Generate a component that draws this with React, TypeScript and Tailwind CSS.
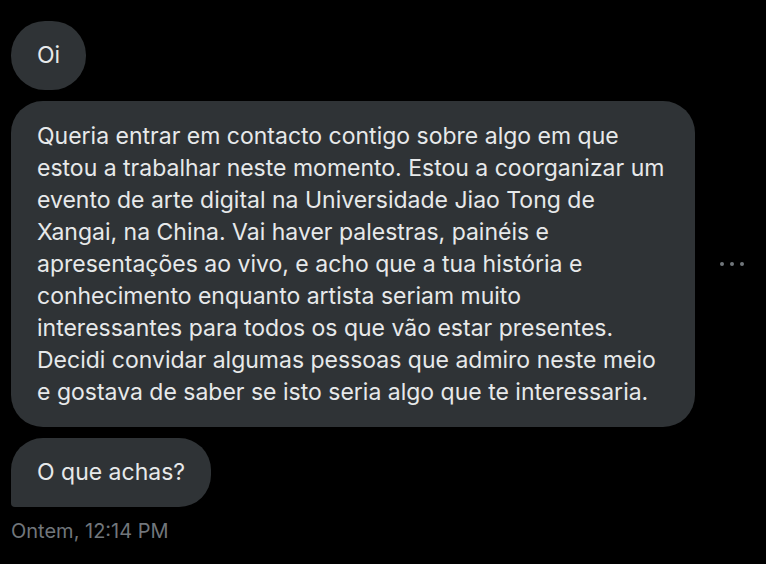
const LINES = [
  'Queria entrar em contacto contigo sobre algo em que',
  'estou a trabalhar neste momento. Estou a coorganizar um',
  'evento de arte digital na Universidade Jiao Tong de',
  'Xangai, na China. Vai haver palestras, painéis e',
  'apresentações ao vivo, e acho que a tua história e',
  'conhecimento enquanto artista seriam muito',
  'interessantes para todos os que vão estar presentes.',
  'Decidi convidar algumas pessoas que admiro neste meio',
  'e gostava de saber se isto seria algo que te interessaria.',
];

export default function App() {
  return (
    <div
      className="w-[766px] h-[564px] bg-black overflow-hidden px-[11px] pt-[21px] text-[#e7e9ea]"
      style={{ fontFamily: 'Inter, "Noto Sans", sans-serif' }}
    >
      <div className="flex flex-col items-start gap-[11px]">
        <div className="bg-[#2f3336] rounded-[34px] px-[26px] py-[18px] text-[23px] leading-[33px]">
          Oi
        </div>

        <div className="flex items-center w-full">
          <div className="w-[684px] bg-[#2f3336] rounded-[32px] px-[26px] py-[19px] text-[23px] leading-[32px]">
            {LINES.map((line, i) => (
              <div key={i} className="whitespace-nowrap">{line}</div>
            ))}
          </div>
          <div className="flex gap-[6px] ml-[25px]">
            <span className="w-[4px] h-[4px] rounded-full bg-[#71767b]" />
            <span className="w-[4px] h-[4px] rounded-full bg-[#71767b]" />
            <span className="w-[4px] h-[4px] rounded-full bg-[#71767b]" />
          </div>
        </div>

        <div className="bg-[#2f3336] rounded-[32px] rounded-bl-[4px] px-[26px] py-[18px] text-[23px] leading-[33px]">
          O que achas?
        </div>
      </div>

      <div className="mt-[12px] text-[20px] leading-[24px] text-[#71767b]">Ontem, 12:14 PM</div>
    </div>
  );
}
